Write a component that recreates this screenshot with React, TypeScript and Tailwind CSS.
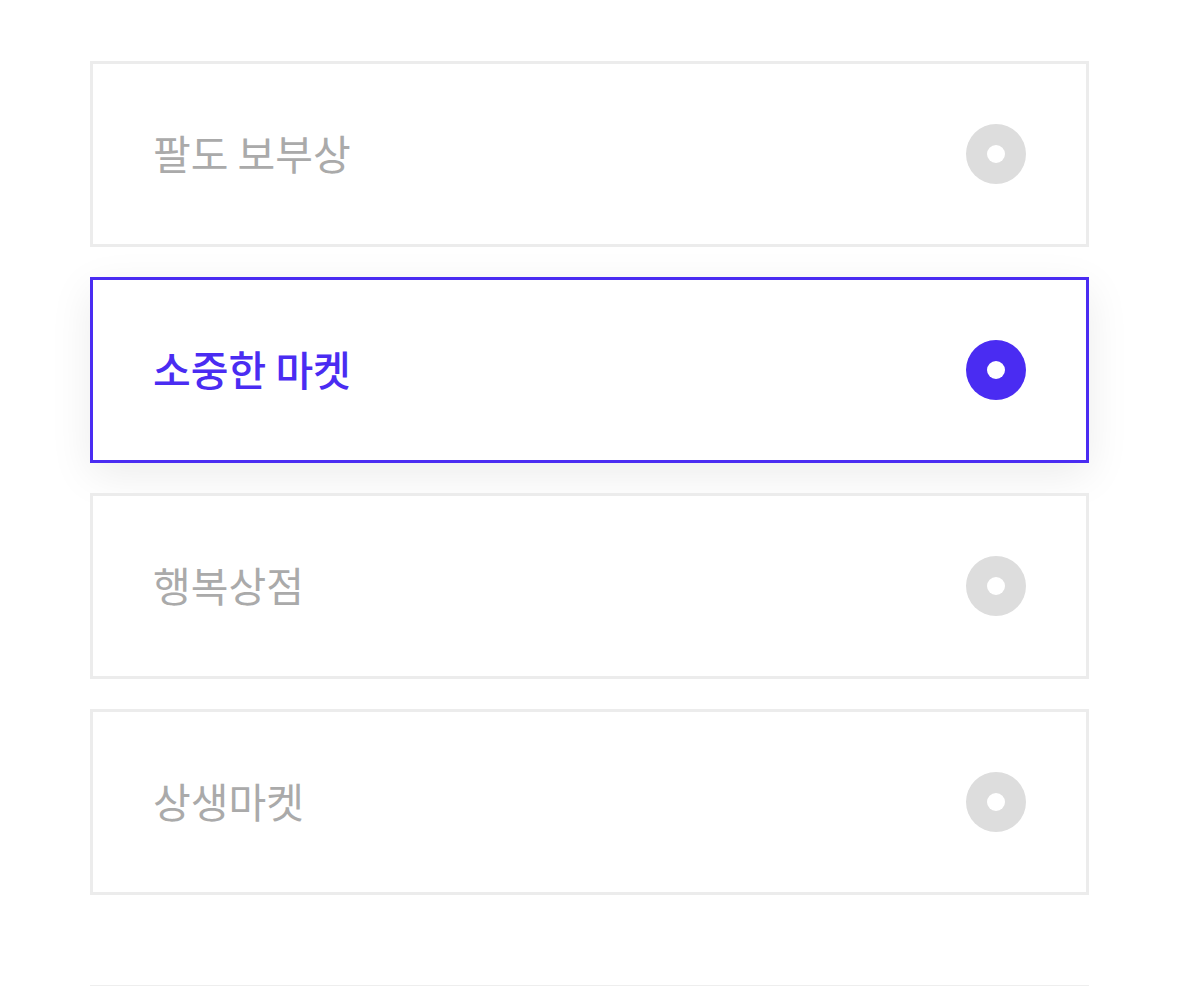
const stores = [
  { name: "팔도 보부상", selected: false },
  { name: "소중한 마켓", selected: true },
  { name: "행복상점", selected: false },
  { name: "상생마켓", selected: false },
];

const Radio = ({ on }: { on: boolean }) => (
  <span
    className={`flex h-[60px] w-[60px] items-center justify-center rounded-full ${
      on ? "bg-[#4a2cf2]" : "bg-[#dddddd]"
    }`}
  >
    <span className="h-[18px] w-[18px] rounded-full bg-white" />
  </span>
);

export default function App() {
  return (
    <div
      className="min-h-[986px] bg-white px-[90px] pt-[61px]"
      style={{ fontFamily: '"Noto Sans CJK KR", "Noto Sans", sans-serif' }}
    >
      <div className="flex w-[999px] flex-col gap-[30px]">
        {stores.map((s) => (
          <button
            key={s.name}
            className={`flex h-[186px] items-center justify-between border-[3px] bg-white px-[60px] text-left ${
              s.selected
                ? "border-[#4a2cf2] shadow-[0_12px_40px_rgba(0,0,0,0.08)]"
                : "border-[#ececec]"
            }`}
          >
            <span
              className={`mb-[4px] text-[41px] leading-none ${
                s.selected ? "font-medium text-[#4a2cf2]" : "font-normal text-[#aaaaaa]"
              }`}
            >
              {s.name}
            </span>
            <Radio on={s.selected} />
          </button>
        ))}
      </div>
      <div className="mt-[90px] h-px w-[999px] bg-[#eeeeee]" />
    </div>
  );
}
